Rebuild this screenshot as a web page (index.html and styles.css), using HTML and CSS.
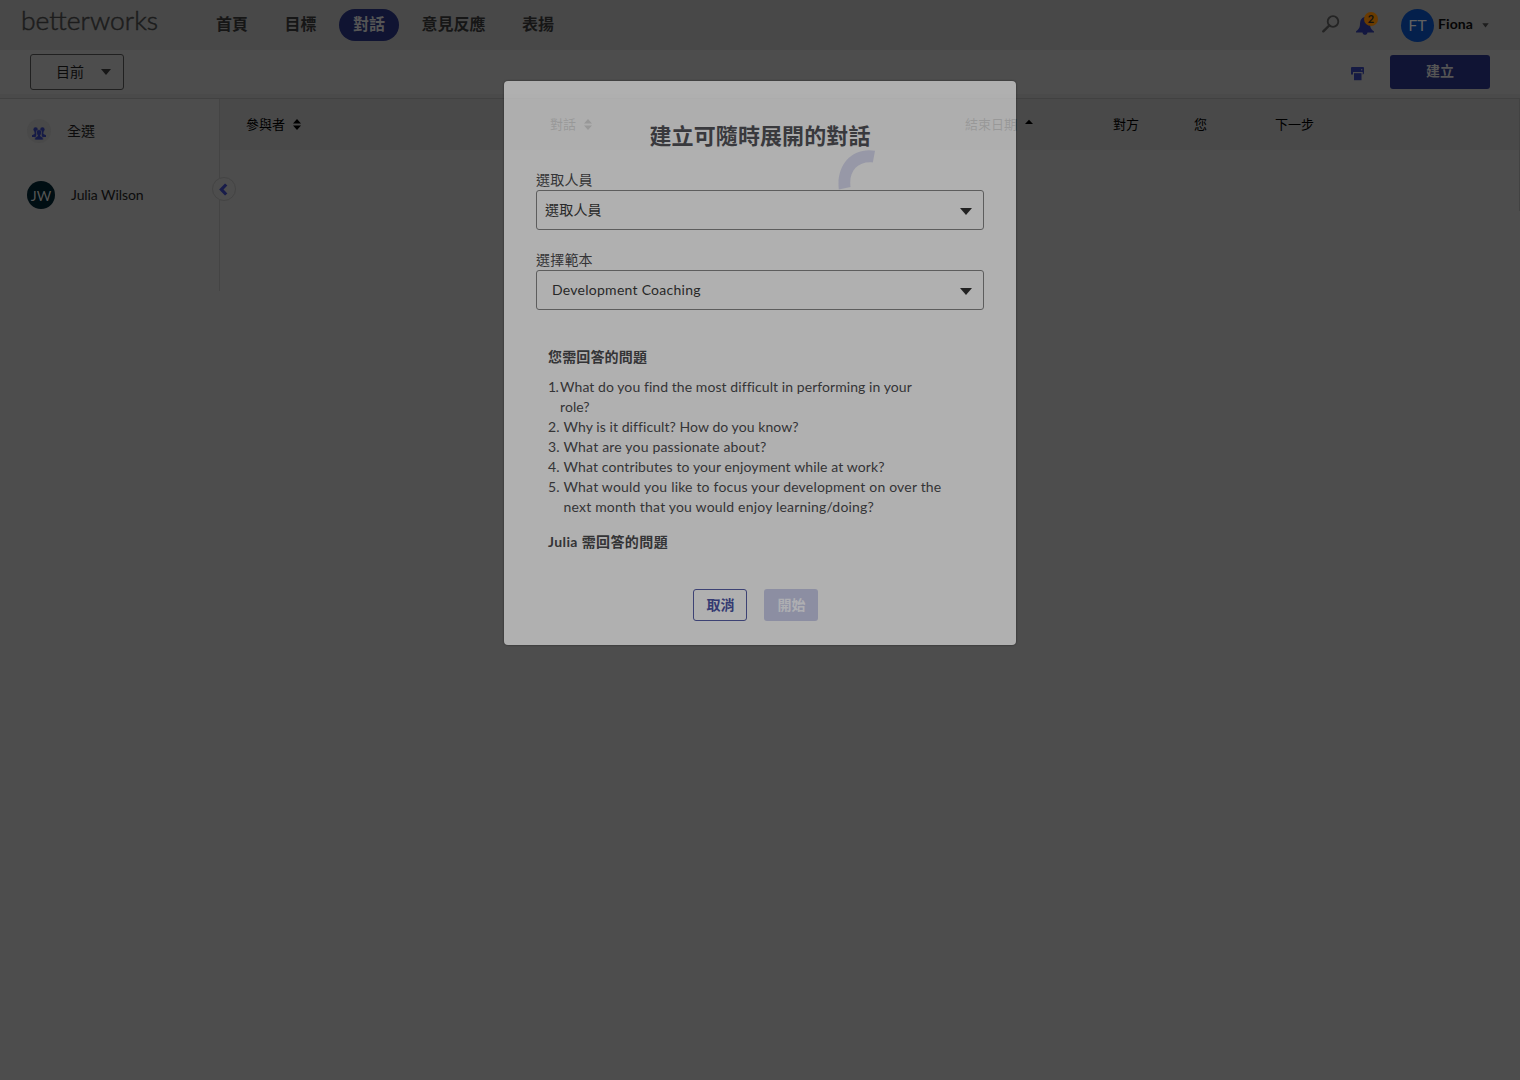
FILE: index.html
```html
<!DOCTYPE html>
<html lang="zh-Hant">
<head>
<meta charset="utf-8">
<title>Betterworks</title>
<link rel="stylesheet" href="styles.css">
</head>
<body>
<header class="topbar">
  <svg class="logo" width="138" height="36" viewBox="0 0 138 36"><text x="0" y="27" textLength="137" lengthAdjust="spacingAndGlyphs">betterworks</text></svg>
  <nav class="nav">
    <a>首頁</a><a>目標</a><a class="active">對話</a><a>意見反應</a><a>表揚</a>
  </nav>
  <div class="account">
    <svg class="search" width="18" height="18" viewBox="0 0 18 18"><circle cx="11" cy="6.5" r="5.3" fill="none" stroke="#242424" stroke-width="1.8"/><path d="M7.2 10.5L1.3 16.3" stroke="#242424" stroke-width="2.4" stroke-linecap="round"/></svg>
    <div class="bell">
      <svg width="20" height="20" viewBox="0 0 20 20"><path d="M9.5 1C6 2 5.200 5 5 8.500C4.800 12.500 3 13.500 1 15.500V16.500H7.500C7.800 18 8.700 18.800 10 18.800S12.200 18 12.500 16.500H19V15.500C16.700 13.500 15.300 12.500 15 8.500L14 3Z" fill="#131740"/></svg>
      <span class="badge">2</span>
    </div>
    <span class="avatar user">FT</span>
    <span class="name">Fiona</span>
    <svg class="caret" width="7" height="5" viewBox="0 0 7 5"><path d="M.3.3H6.700L3.500 4.500Z" fill="#1d1d1d"/></svg>
  </div>
</header>
<div class="toolbar">
  <div class="filter"><span>目前</span><svg width="10" height="6" viewBox="0 0 10 6"><path d="M0 0H10L5 6Z" fill="#171717"/></svg></div>
  <svg class="printer" width="14" height="14" viewBox="0 0 14 14"><path d="M1 0H12Q13 0 13 1V5.500Q13 7.500 11.700 7.500V5H2V7.500H0V1Q0 0 1 0Z" fill="#151a43"/><circle cx="10.700" cy="2.700" r=".7" fill="#4d4d4d"/><rect x="3" y="6.200" width="7.500" height="7" fill="#151a43"/></svg>
  <button class="create">建立</button>
</div>
<div class="main">
  <aside class="sidebar">
    <div class="person all">
      <span class="group"><svg width="14" height="13" viewBox="0 0 14 13"><g fill="#161b46"><circle cx="3.600" cy="2.500" r="2.200"/><circle cx="10.400" cy="2.500" r="2.200"/><path d="M2.500 4H5L4 10H0V8.300L2.600 7ZM11.500 4H9L10 10H14V8.300L11.400 7Z"/><path d="M7 2.600C4.600 2.600 4.200 4.500 4.500 6.200C4.700 7.500 5.500 8.300 5.600 9L2.800 10.600V13H11.200V10.600L8.400 9C8.500 8.300 9.300 7.500 9.500 6.200C9.800 4.500 9.400 2.600 7 2.600Z" stroke="#4a4a4a" stroke-width=".7"/></g></svg></span>
      <span class="label">全選</span>
    </div>
    <div class="person"><span class="avatar jw">JW</span><span class="julia">Julia Wilson</span></div>
    <span class="collapse"><svg width="9" height="13" viewBox="0 0 9 13"><path d="M7.200 1.500L2.400 6.500L7.200 11.500" fill="none" stroke="#181c4a" stroke-width="3.200"/></svg></span>
  </aside>
  <section class="table">
    <div class="row">
      <span class="c1">參與者 <svg width="8" height="11" viewBox="0 0 8 11"><path d="M0 4.500L4 0L8 4.500ZM0 6.500H8L4 11Z"/></svg></span>
      <span class="c2">對話 <svg width="8" height="11" viewBox="0 0 8 11"><path d="M0 4.500L4 0L8 4.500ZM0 6.500H8L4 11Z"/></svg></span>
      <span class="c3">結束日期 <svg class="up" width="8" height="11" viewBox="0 0 8 11"><path d="M0 5L4 .7L8 5Z"/></svg></span>
      <span class="c4">對方</span><span class="c5">您</span><span>下一步</span>
    </div>
  </section>
</div>
<div class="overlay">
  <div class="modal">
    <h1>建立可隨時展開的對話</h1>
    <svg class="spinner" width="38" height="40" viewBox="0 0 38 40"><path d="M37 .8C15-3 -2 14 .8 39.500L12.500 37C10.500 21 20 11 34.800 12.500Z" fill="#9798a7"/></svg>
    <label>選取人員</label>
    <div class="select"><span>選取人員</span><svg width="12" height="7" viewBox="0 0 12 7"><path d="M0 0H12L6 7Z" fill="#222"/></svg></div>
    <label class="second">選擇範本</label>
    <div class="select template"><span class="dev">Development Coaching</span><svg width="12" height="7" viewBox="0 0 12 7"><path d="M0 0H12L6 7Z" fill="#222"/></svg></div>
    <div class="questions">
      <h2>您需回答的問題</h2>
      <ol>
        <li class="tight"><span class="num">1.</span><p>What do you find the most difficult in performing in your<br>role?</p></li>
        <li class="tight"><span class="num">2.</span><p>Why is it difficult? How do you know?</p></li>
        <li><span class="num">3.</span><p>What are you passionate about?</p></li>
        <li class="snug"><span class="num">4.</span><p>What contributes to your enjoyment while at work?</p></li>
        <li><span class="num">5.</span><p>What would you like to focus your development on over the<br>next month that you would enjoy learning/doing?</p></li>
      </ol>
      <h2 class="julia-title">Julia 需回答的問題</h2>
    </div>
    <div class="actions"><button class="cancel">取消</button><button class="start">開始</button></div>
  </div>
</div>
</body>
</html>
```
FILE: styles.css
```css
* { box-sizing: border-box; }
body { margin: 0; height: 1080px; overflow: hidden; background: #4d4d4d; color: #0b0b0b; font-family: Lato, "Noto Sans CJK TC", sans-serif; font-size: 14px; }
svg { display: block; flex: none; }
button { font: inherit; padding: 0; }
.topbar { height: 50px; background: #484848; display: flex; align-items: center; padding: 0 31px 0 21px; }
.logo { margin-top: -8px; overflow: visible; }
.logo text { font-family: Lato, sans-serif; font-weight: 300; font-size: 25px; fill: #1c1c1c; stroke: #1c1c1c; stroke-width: .5px; }
.nav { display: flex; gap: 8.500px; margin-left: 43px; font-size: 16px; font-weight: 700; color: #161616; }
.nav a { height: 32px; line-height: 30px; padding: 0 14px; border-radius: 16px; white-space: nowrap; }
.nav .active { background: #101432; color: #555; }
.account { margin-left: auto; display: flex; align-items: center; }
.search { margin-top: -3px; }
.bell { position: relative; margin: 2px 0 0 15px; }
.badge { position: absolute; left: 9px; top: -4px; width: 14px; height: 14px; border-radius: 50%; background: #6a3b00; color: #111; font-size: 11px; line-height: 14px; text-align: center; font-weight: 700; }
.avatar { border-radius: 50%; text-align: center; flex: none; }
.user { width: 33px; height: 33px; line-height: 32px; background: #04204c; color: #606060; font-size: 16px; margin-left: 26px; }
.name { font-size: 14px; font-weight: 700; margin: -3px 8px 0 4px; color: #050505; width: 36px; letter-spacing: .1px; }
.toolbar { height: 49px; border-bottom: 1px solid #414141; display: flex; align-items: center; padding: 0 30px 4px; background: linear-gradient(#4d4d4d 44px, #4a4a4a 44px); }
.filter { width: 94px; height: 36px; border: 1px solid #202020; border-radius: 3px; display: flex; align-items: center; justify-content: space-between; padding: 0 12px 0 25px; }
.filter span { margin-top: -2px; }
.printer { margin: 4px 25px 0 auto; }
.create { width: 100px; height: 34px; border: 0; border-radius: 3px; background: #101434; color: #555; font-weight: 700; padding-bottom: 4px; }
.main { display: flex; align-items: flex-start; }
.sidebar { position: relative; width: 220px; height: 192px; border-right: 1px solid #444; padding: 20px 0 0 27px; flex: none; }
.person { height: 28px; display: flex; align-items: center; }
.all { height: 24px; margin-bottom: 38px; gap: 16px; }
.label { margin-top: -2px; }
.group { width: 24px; height: 24px; border-radius: 50%; background: #494949; display: flex; align-items: center; justify-content: center; padding-top: 4px; }
.jw { width: 28px; height: 28px; line-height: 29px; background: #000e13; color: #555; margin-right: 16px; font-size: 14px; }
.julia { letter-spacing: -.08px; margin-top: -2px; }
.collapse { position: absolute; left: 212px; top: 78px; width: 24px; height: 24px; border: 1px solid #444; border-radius: 50%; background: #4d4d4d; display: flex; align-items: center; justify-content: center; padding-right: 2px; }
.table { flex: 1; height: 112px; border-right: 1px solid #424242; }
.row { display: flex; height: 51px; padding: 0 0 1px 26px; background: #494949; font-size: 13px; color: #000; }
.row span { display: flex; align-items: center; gap: 8px; white-space: nowrap; padding-bottom: 2px; }
.row svg { margin-top: 3px; }
.row .c1 { width: 304px; }
.row .c2 { width: 415px; }
.row .c3 { width: 148px; }
.row .c4 { width: 81px; }
.row .c5 { width: 81px; }
.overlay { position: absolute; inset: 0; display: flex; justify-content: center; align-items: flex-start; padding-top: 81px; }
.modal { position: relative; width: 512px; height: 564px; border-radius: 4px; padding: 42px 32px 0; background: rgba(220, 220, 220, .69); box-shadow: 0 0 2px rgba(0, 0, 0, .55); color: #343436; }
h1 { margin: 0 0 21px; height: 26px; line-height: 26px; font-size: 22px; letter-spacing: .1px; text-align: center; font-weight: 700; color: #39393d; }
.spinner { position: absolute; left: 334px; top: 69px; }
label { display: block; height: 20px; line-height: 20px; letter-spacing: .2px; }
.select { height: 40px; border: 1px solid #5d5d5d; border-radius: 3px; display: flex; align-items: center; justify-content: space-between; padding: 0 11px 0 8px; color: #282828; letter-spacing: .2px; }
.select span { margin-top: -3px; }
.select svg { margin-top: 2px; }
.second { margin-top: 20px; }
.template { padding-left: 15px; }
.select .dev { letter-spacing: .26px; margin-top: -2px; }
.questions { margin: 37px 0 0 12px; }
h2 { margin: 0; height: 20px; line-height: 20px; font-size: 14px; font-weight: 700; letter-spacing: .15px; }
.julia-title { letter-spacing: .4px; }
ol { list-style: none; margin: 10px 0 15px; padding: 0; }
li { display: flex; line-height: 20px; white-space: nowrap; letter-spacing: .19px; }
li p { margin: 0; }
.tight { letter-spacing: .07px; }
.snug { letter-spacing: .11px; }
.num { width: 15.500px; }
li:first-child .num { width: 12px; letter-spacing: -.7px; }
.actions { display: flex; gap: 17px; margin: 37px 0 0 157.400px; }
.actions button { width: 54px; height: 32px; border-radius: 3px; font-weight: 700; padding-bottom: 3px; }
.actions .cancel { border: 1px solid #3d4274; background: none; color: #353a72; }
.actions .start { border: 0; background: #8c8ea2; color: #aeaeb2; }
```
